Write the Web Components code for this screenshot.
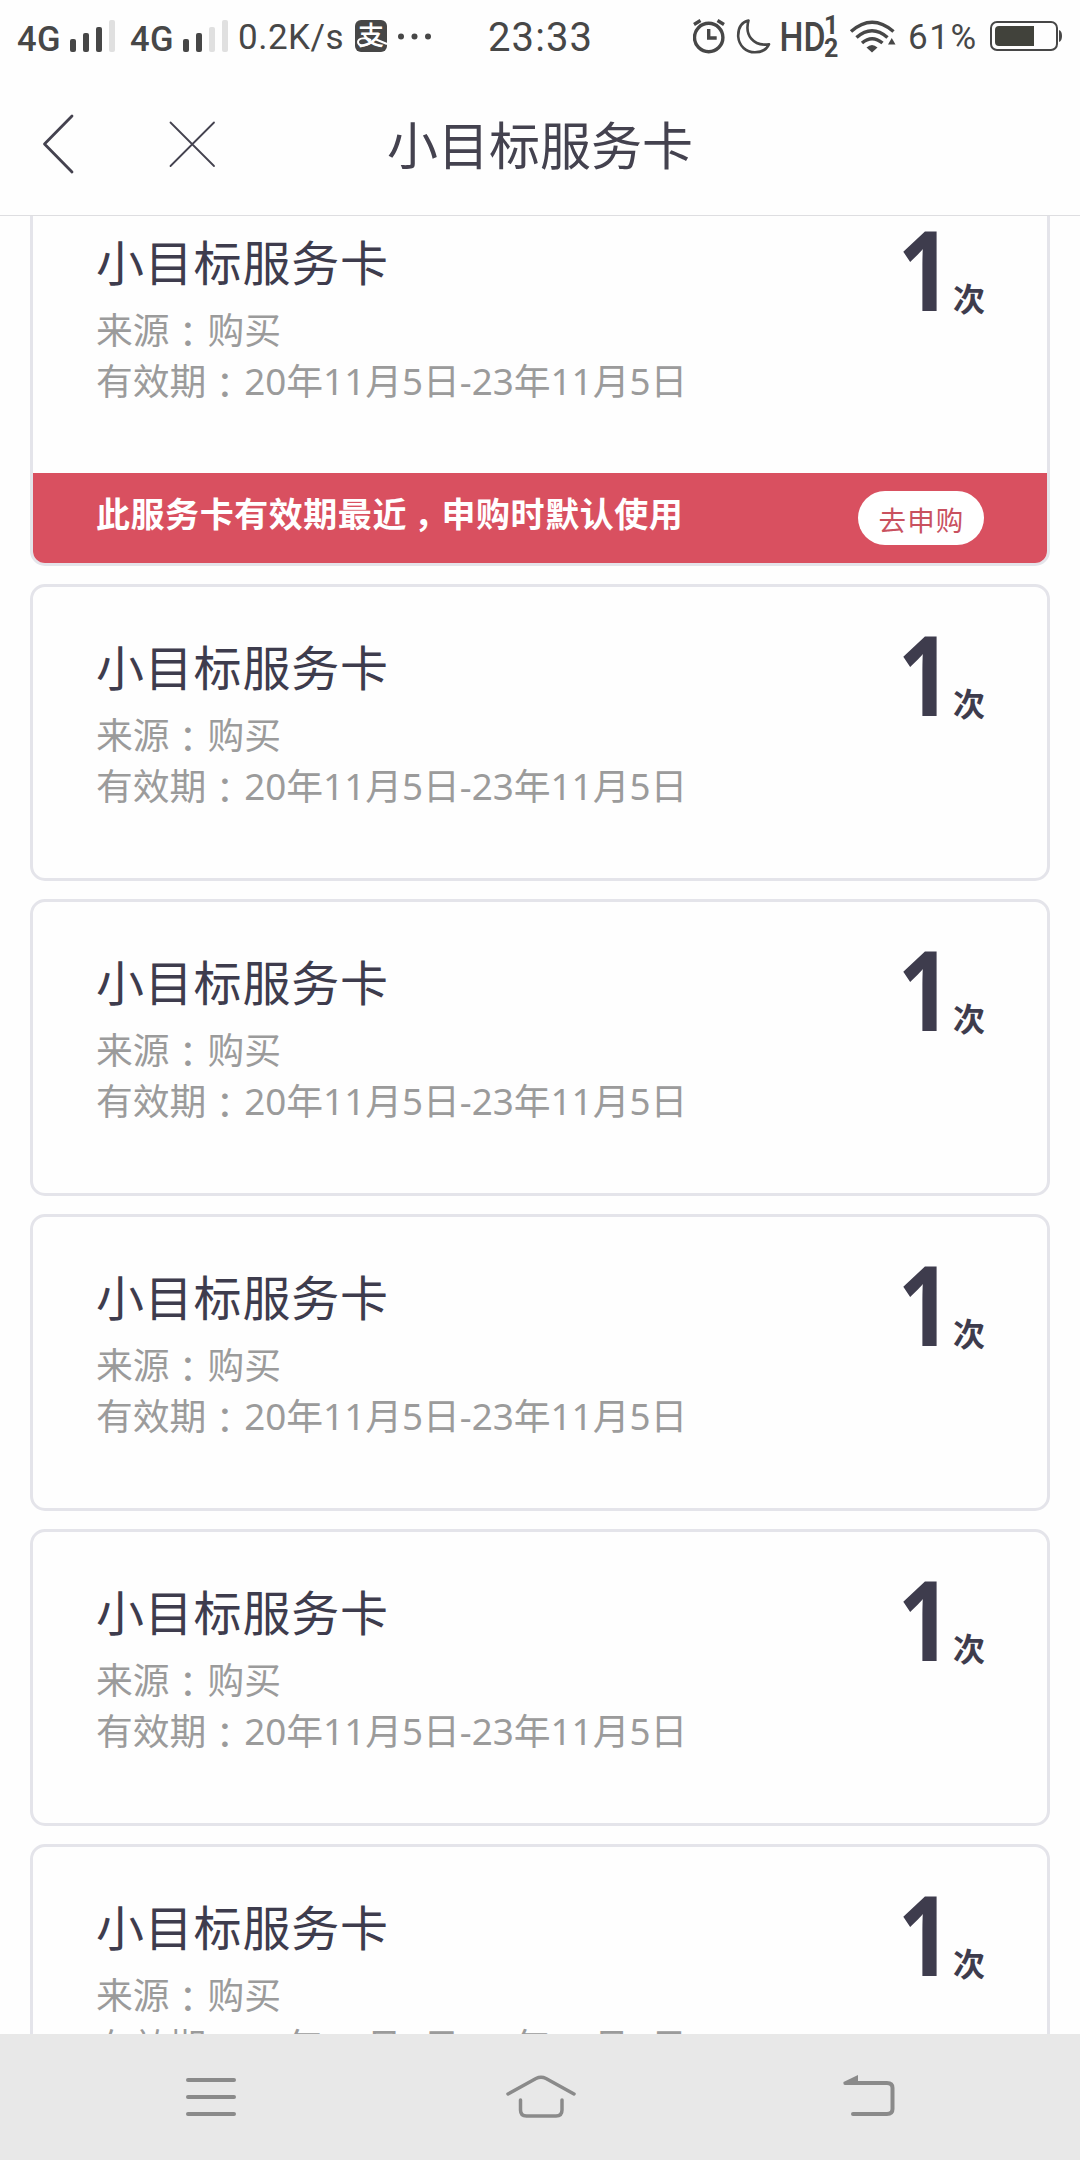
<!DOCTYPE html>
<html lang="zh-CN">
<head>
<meta charset="utf-8">
<title>小目标服务卡</title>
<style>
  body {
    margin: 0;
    width: 1080px;
    height: 2160px;
    overflow: hidden;
    display: flex;
    flex-direction: column;
    background: #fefefe;
    color: #3e3c4d;
    font-family: 'Noto Sans', 'Noto Sans CJK SC', sans-serif;
  }
</style>
</head>
<body>

<template id="signal-tmpl">
  <style>
    :host { display: flex; align-items: flex-end; height: 32px; }
    span { width: 53px; font: 500 34.500px/24px Roboto, sans-serif; letter-spacing: 0.4px; height: 25px; }
    .bars { display: flex; align-items: flex-end; gap: 7px; }
    i { width: 6px; border-radius: 2px; background: #474747; }
    i:nth-child(1) { height: 13px; }
    i:nth-child(2) { height: 19px; }
    i:nth-child(3) { height: 25px; }
    i:nth-child(4) { height: 32px; }
    i.off { background: #e0e0e0; }
  </style>
  <span><slot></slot></span>
  <div class="bars"><i></i><i></i><i></i><i></i></div>
</template>

<template id="status-tmpl">
  <style>
    :host {
      display: grid;
      grid-template-columns: 488px 1fr 387px;
      height: 72px;
      flex: none;
      color: #474747;
      font-family: Roboto, sans-serif;
    }
    div { display: flex; align-items: center; height: 72px; }
    .left { padding-left: 17px; }
    svg { display: block; flex: none; }
    .speed { width: 106px; margin-left: 10px; font-size: 35px; letter-spacing: 0.5px; line-height: 72px; padding-top: 3px; white-space: nowrap; }
    signal-bars + signal-bars { margin-left: 15px; }
    .time { font-size: 40px; letter-spacing: 1.1px; line-height: 72px; padding-top: 4px; box-sizing: border-box; }
    .battery { font-size: 35px; letter-spacing: 1.6px; line-height: 72px; padding-top: 3px; width: 71px; margin: 0 11px 0 12px; }
  </style>
  <div class="left">
    <signal-bars level="3">4G</signal-bars>
    <signal-bars level="2">4G</signal-bars>
    <span class="speed">0.2K/s</span>
    <svg width="90" height="72" viewBox="344 0 90 72">
      <rect x="355" y="20" width="32" height="32" rx="6" fill="#474747"/>
      <text x="358" y="45" font-family="Noto Sans CJK SC" font-weight="500" font-size="26" fill="#fff">支</text>
      <path d="M371 40c-5-3-13-2-13 2s9 5 13 0M375 39l12 5" fill="none" stroke="#fff" stroke-width="2"/>
      <g fill="#474747"><circle cx="401" cy="36.500" r="3"/><circle cx="414.500" cy="36.500" r="3"/><circle cx="428" cy="36.500" r="3"/></g>
    </svg>
  </div>
  <div class="time">23:33</div>
  <div class="right">
    <svg width="203" height="72" viewBox="693 0 203 72" fill="none" stroke="#474747">
      <!-- alarm -->
      <circle cx="708.700" cy="37.500" r="14.200" stroke-width="3.400"/>
      <path d="M708.700 29v9h8" stroke-width="3.400"/>
      <path d="M694 24.500l6.500-4M724 24.500l-6.500-4" stroke-width="3.400"/>
      <!-- do not disturb -->
      <path d="M748.500 20.500C740 22.500 738 30 738.200 36.500C739 46 746 52.300 755 52.300C762 52.300 767 49 769 44.300C753 46.500 744.500 35 748.500 20.500Z" stroke-width="2.600" stroke-linejoin="round"/>
      <g fill="#474747" stroke="none" font-family="Roboto">
        <text x="779.500" y="51" font-size="40.500" font-weight="500" textLength="46" lengthAdjust="spacingAndGlyphs">HD</text>
        <text x="824" y="34" font-size="25" font-weight="700">1</text>
        <text x="824" y="57" font-size="25" font-weight="700">2</text>
      </g>
      <!-- wifi -->
      <path d="M851 31.500Q872 13 893.500 31.500M856.500 37.500Q872 24 887.500 37.500M862 43Q872 34.500 882.500 43" stroke-width="3.500"/>
      <path d="M866.500 47.500Q872 42.500 877.500 47.500L872 52.500Z" fill="#474747" stroke="none"/>
      <path d="M888 44.500h7.500l-3.750-6.500z" fill="#474747" stroke="none"/>
    </svg>
    <span class="battery">61%</span>
    <svg width="74" height="32" viewBox="0 0 74 32">
      <rect x="1" y="2" width="66" height="28" rx="6" fill="none" stroke="#474747" stroke-width="2"/>
      <path d="M9 6h35v20H9q-4 0-4-4V10q0-4 4-4z" fill="#41423b"/>
      <path d="M69 10q3 1 3 6t-3 6z" fill="#474747"/>
    </svg>
  </div>
</template>

<template id="header-tmpl">
  <style>
    :host {
      display: grid;
      grid-template-columns: 240px 1fr 240px;
      align-items: center;
      height: 143px;
      flex: none;
      border-bottom: 1px solid #dedee1;
      color: #44424f;
    }
    svg { display: block; }
    h1 { margin: -2px 0 0; font-weight: 400; font-size: 51px; line-height: 72px; text-align: center; font-family: 'Noto Sans CJK SC', sans-serif; }
  </style>
  <svg width="240" height="143" viewBox="0 72 240 143" fill="none" stroke="#44424f" stroke-linecap="round" stroke-linejoin="round">
    <path d="M72 116L44.500 144L72 172" stroke-width="2.800"/>
    <path d="M170.500 122.500L214 166M214 122.500L170.500 166" stroke-width="1.800"/>
  </svg>
  <h1><slot></slot></h1>
</template>

<template id="card-tmpl">
  <style>
    :host {
      display: block;
      flex: none;
      border: 3px solid #e4e4ea;
      border-radius: 15px;
      overflow: hidden;
    }
    .main {
      display: flex;
      justify-content: space-between;
      box-sizing: border-box;
      height: 291px;
      padding: 45px 62px 0 63px;
    }
    h2 { margin: 0 0 4px; height: 72px; font-weight: 400; font-size: 48px; line-height: 72px; letter-spacing: 0.8px; }
    .meta { height: 51px; color: #9b9b9b; font-size: 36.8px; line-height: 51px; white-space: nowrap; }
    .count { display: flex; align-items: baseline; height: 90px; margin-top: -1px; font-weight: 700; }
    /* narrow digit */
    .num { font-size: 112px; line-height: 84px; transform: scaleX(0.84); transform-origin: 85% 50%; }
    .unit { font-size: 32px; line-height: 40px; font-family: 'Noto Sans CJK SC', sans-serif; }
  </style>
  <div class="main">
    <div>
      <h2><slot name="title"></slot></h2>
      <div class="meta"><slot name="source"></slot></div>
      <div class="meta"><slot name="date"></slot></div>
    </div>
    <div class="count"><span class="num"><slot name="count"></slot></span><span class="unit">次</span></div>
  </div>
  <slot name="banner"></slot>
</template>

<template id="banner-tmpl">
  <style>
    :host {
      display: flex;
      align-items: center;
      justify-content: space-between;
      height: 90px;
      padding: 0 63px;
      background: #d95060;
      color: #fff;
    }
    p { margin: 0 0 10px; font-size: 34px; font-weight: 700; letter-spacing: 0.55px; line-height: 50px; font-family: 'Noto Sans CJK SC', sans-serif; }
    button {
      width: 126px;
      height: 54px;
      padding: 2px 0 0 1px;
      border: 0;
      border-radius: 27px;
      background: #fff;
      color: #c9515f;
      font: 27.500px/48px 'Noto Sans CJK SC', sans-serif;
      letter-spacing: 1.2px;
    }
  </style>
  <p><slot></slot></p>
  <button>去申购</button>
</template>

<template id="nav-tmpl">
  <style>
    :host { display: flex; height: 126px; flex: none; background: #e8e8e8; }
    svg { display: block; }
  </style>
  <svg width="1080" height="126" viewBox="0 2034 1080 126" fill="none" stroke="#8a8a8a" stroke-width="4" stroke-linecap="round" stroke-linejoin="round">
    <path d="M188 2080h46M188 2097h46M188 2114h46"/>
    <path d="M508 2094L536 2078.500Q541 2076 546 2078.500L574 2094" stroke-width="3.500"/>
    <path d="M520.500 2100V2110Q520.500 2116 526.500 2116H556Q562 2116 562 2110V2100" stroke-width="3.500"/>
    <path d="M850 2083H887Q892.500 2083 892.500 2088V2109Q892.500 2114 887 2114H853"/>
    <path d="M843.500 2082L858 2075V2085H845Q843 2085 843.500 2082Z" fill="#8a8a8a" stroke="none"/>
  </svg>
</template>

<script>
function define(name, tmplId, init) {
  customElements.define(name, class extends HTMLElement {
    connectedCallback() {
      this.attachShadow({ mode: 'open' }).append(document.getElementById(tmplId).content.cloneNode(true));
      if (init) init(this);
    }
  });
}

define('signal-bars', 'signal-tmpl', el => {
  el.shadowRoot.querySelectorAll('i').forEach((bar, i) => {
    bar.classList.toggle('off', i >= Number(el.getAttribute('level')));
  });
});
define('status-bar', 'status-tmpl');
define('page-header', 'header-tmpl');
define('card-banner', 'banner-tmpl');
define('service-card', 'card-tmpl');
define('system-nav', 'nav-tmpl');

customElements.define('card-list', class extends HTMLElement {
  connectedCallback() {
    this.attachShadow({ mode: 'open' }).innerHTML = `
      <style>
        :host { display: block; flex: 1; min-height: 0; overflow: hidden; }
        /* the list is scrolled a little */
        .list { display: flex; flex-direction: column; gap: 18px; padding: 0 30px; margin-top: -37px; }
        .colon { font-family: 'Noto Sans CJK TC', sans-serif; position: relative; top: 4px; margin-right: 1px; }
        .comma { position: relative; left: 7px; }
      </style>
      <div class="list"></div>
    `;
    const list = this.shadowRoot.querySelector('.list');
    for (let i = 0; i < Number(this.getAttribute('count')); i++) {
      const card = document.createElement('service-card');
      // the zh-TW colon sits in the middle of its box
      card.innerHTML = `
        <span slot="title">小目标服务卡</span>
        <span slot="source">来源<span class="colon" lang="zh-TW">：</span>购买</span>
        <span slot="date">有效期<span class="colon" lang="zh-TW">：</span>20年11月5日-23年11月5日</span>
        <span slot="count">1</span>
        ${i === 0 ? '<card-banner slot="banner">此服务卡有效期最近<span class="comma">，</span>申购时默认使用</card-banner>' : ''}
      `;
      list.append(card);
    }
  }
});
</script>

<status-bar></status-bar>
<page-header>小目标服务卡</page-header>
<card-list count="6"></card-list>
<system-nav></system-nav>

</body>
</html>
